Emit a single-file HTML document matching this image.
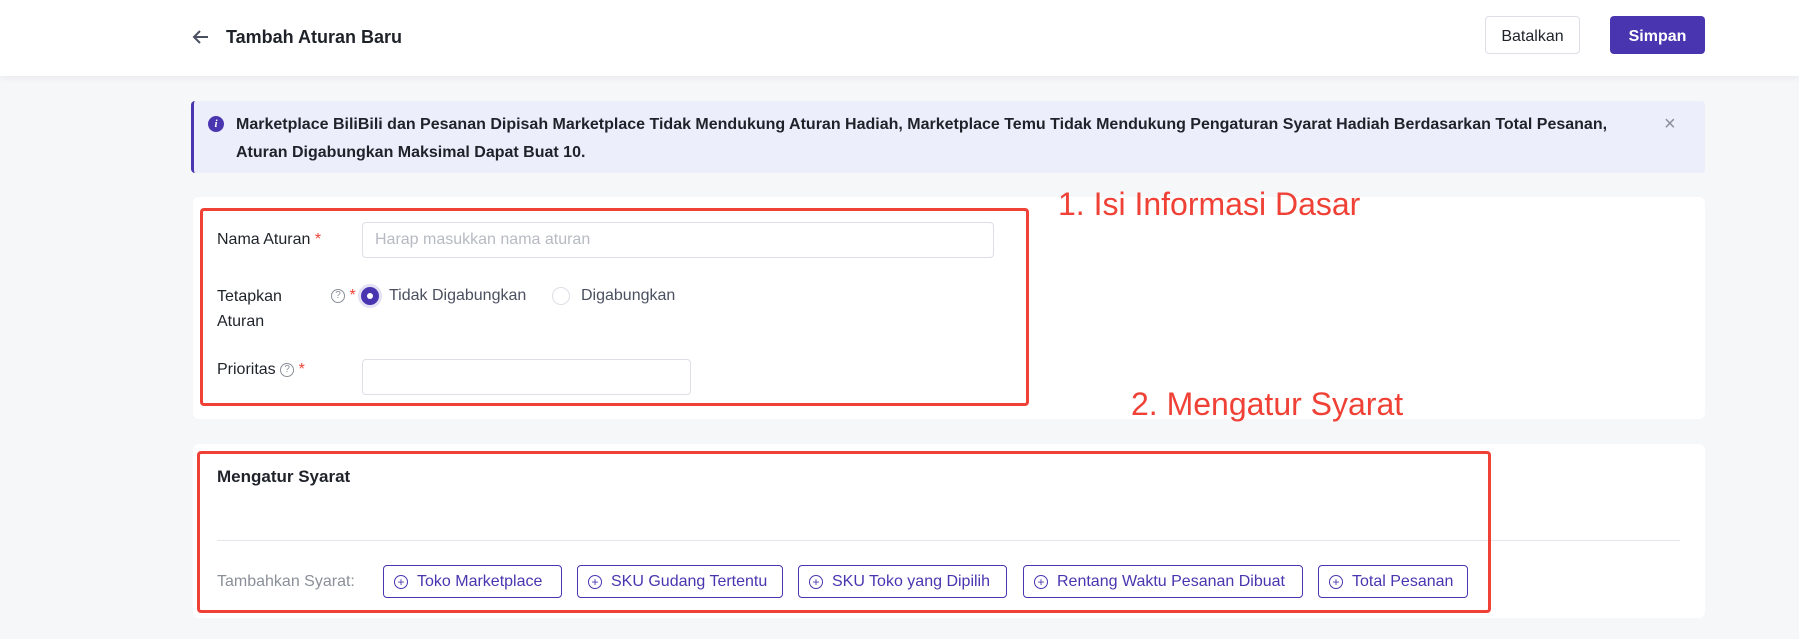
<!DOCTYPE html>
<html><head><meta charset="utf-8"><style>
*{box-sizing:border-box;margin:0;padding:0}
body{width:1799px;height:639px;background:#f6f7f9;font-family:"Liberation Sans",sans-serif;position:relative;overflow:hidden;color:#1f2329}
.a{position:absolute}
.hdr{left:0;top:0;width:1799px;height:76px;background:#fff;box-shadow:0 2px 6px rgba(0,0,0,.06)}
.btn{position:absolute;border-radius:4px;font-size:16px;display:flex;align-items:center;justify-content:center}
.card{background:#fff;border-radius:6px}
.red{border:3px solid #ef4136;border-radius:4px}
.lbl{font-size:16px;color:#1f2329;position:absolute}
.inp{position:absolute;border:1px solid #dcdfe6;border-radius:4px;background:#fff}
.star{color:#ef4136}
.q{display:inline-block;width:14px;height:14px;border:1px solid #8a8f99;border-radius:50%;font-size:10px;line-height:12px;text-align:center;color:#8a8f99;vertical-align:middle}
.ab{position:absolute;top:565px;height:33px;border:1px solid #4a35b0;border-radius:4px;color:#4a35b0;font-size:16px;display:flex;align-items:center;padding-left:10px}
.ab i{display:inline-block;width:14px;height:14px;border:1px solid #4a35b0;border-radius:50%;font-style:normal;font-size:12px;line-height:12px;text-align:center;margin-right:9px}
.ann{position:absolute;color:#ef4136;font-size:32px;white-space:nowrap}
</style></head><body>
<div class="a hdr"></div>
<svg class="a" style="left:192px;top:29px" width="18" height="16" viewBox="0 0 18 16"><path d="M16 8H3M8 2L2 8l6 6" fill="none" stroke="#4b5060" stroke-width="2"/></svg>
<div class="a" style="left:226px;top:27px;font-size:18px;font-weight:bold;color:#1f2329">Tambah Aturan Baru</div>
<div class="btn" style="left:1485px;top:16px;width:95px;height:38px;border:1px solid #dcdfe6;background:#fff;color:#1f2329;padding-top:3px">Batalkan</div>
<div class="btn" style="left:1610px;top:16px;width:95px;height:38px;background:#4a35b0;color:#fff;font-weight:bold;padding-top:3px">Simpan</div>

<div class="a" style="left:191px;top:101px;width:1514px;height:72px;background:#eceefc;border-left:3px solid #4a35b0;border-radius:4px"></div>
<div class="a" style="left:208px;top:116px;width:16px;height:16px;border-radius:50%;background:#4a35b0;color:#fff;font-size:11px;font-style:italic;font-weight:bold;text-align:center;line-height:16px;font-family:'Liberation Serif',serif">i</div>
<div class="a" style="left:236px;top:111px;font-size:16px;font-weight:bold;line-height:28px;color:#1f2329;width:1440px">Marketplace BiliBili dan Pesanan Dipisah Marketplace Tidak Mendukung Aturan Hadiah, Marketplace Temu Tidak Mendukung Pengaturan Syarat Hadiah Berdasarkan Total Pesanan,<br>Aturan Digabungkan Maksimal Dapat Buat 10.</div>
<div class="a" style="left:1664px;top:113px;font-size:20px;color:#8a8f99">×</div>

<div class="a card" style="left:193px;top:197px;width:1512px;height:222px"></div>
<div class="a card" style="left:193px;top:444px;width:1512px;height:174px"></div>

<div class="lbl" style="left:217px;top:231px">Nama Aturan <span class="star">*</span></div>
<div class="inp" style="left:362px;top:222px;width:632px;height:36px"></div>
<div class="a" style="left:375px;top:231px;font-size:16px;color:#b7bac2">Harap masukkan nama aturan</div>

<div class="lbl" style="left:217px;top:284px;line-height:25px">Tetapkan<br>Aturan</div>
<div class="a" style="left:331px;top:287px"><span class="q">?</span> <span class="star" style="font-size:16px">*</span></div>
<div class="a" style="left:361px;top:287px;width:18px;height:18px;border-radius:50%;background:#4a35b0;box-shadow:0 0 0 3px #e4e1f5"></div>
<div class="a" style="left:367px;top:293px;width:6px;height:6px;border-radius:50%;background:#fff"></div>
<div class="a" style="left:389px;top:287px;font-size:16px;color:#4b5060">Tidak Digabungkan</div>
<div class="a" style="left:552px;top:287px;width:18px;height:18px;border-radius:50%;border:1px solid #dcdfe6;background:#fff"></div>
<div class="a" style="left:581px;top:287px;font-size:16px;color:#4b5060">Digabungkan</div>

<div class="lbl" style="left:217px;top:361px">Prioritas <span class="q">?</span> <span class="star">*</span></div>
<div class="inp" style="left:362px;top:359px;width:329px;height:36px"></div>

<div class="a red" style="left:200px;top:208px;width:829px;height:198px"></div>
<div class="ann" style="left:1058px;top:186px">1. Isi Informasi Dasar</div>
<div class="ann" style="left:1131px;top:386px">2. Mengatur Syarat</div>

<div class="a" style="left:217px;top:467px;font-size:17px;font-weight:bold">Mengatur Syarat</div>
<div class="a" style="left:217px;top:540px;width:1463px;height:1px;background:#e4e6eb"></div>
<div class="a" style="left:217px;top:573px;font-size:16px;color:#8a8f99">Tambahkan Syarat:</div>
<div class="ab" style="left:383px;width:179px"><i>+</i>Toko Marketplace</div>
<div class="ab" style="left:577px;width:206px"><i>+</i>SKU Gudang Tertentu</div>
<div class="ab" style="left:798px;width:209px"><i>+</i>SKU Toko yang Dipilih</div>
<div class="ab" style="left:1023px;width:280px"><i>+</i>Rentang Waktu Pesanan Dibuat</div>
<div class="ab" style="left:1318px;width:150px"><i>+</i>Total Pesanan</div>
<div class="a red" style="left:197px;top:451px;width:1294px;height:162px"></div>
</body></html>
